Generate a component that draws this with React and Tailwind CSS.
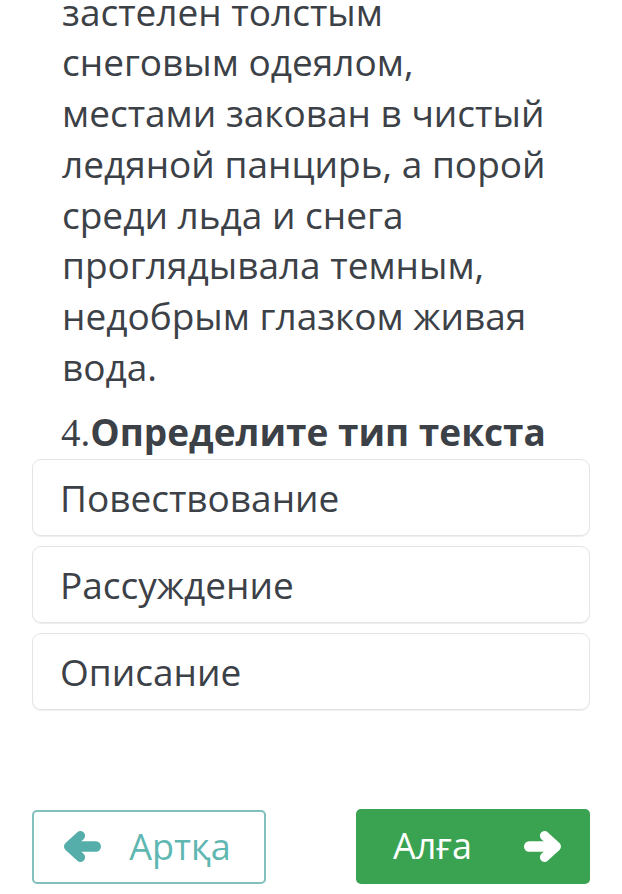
import React from 'react';

const Arrow = ({ dir = 'right', color = '#fff' }) => (
  <svg
    width="38"
    height="31"
    viewBox="0 0 37 30"
    className={dir === 'left' ? 'scale-x-[-1]' : ''}
    fill="none"
    stroke={color}
    strokeLinecap="round"
    strokeLinejoin="round"
  >
    <path d="M5 15 H30" strokeWidth="10" />
    <path d="M20 4.5 L31.5 15 L20 25.5" strokeWidth="9" />
  </svg>
);

const options = ['Повествование', 'Рассуждение', 'Описание'];

const App = () => {
  return (
    <div className="w-[622px] h-[894px] overflow-hidden bg-white font-['Open_Sans',sans-serif] text-[#3c4147]">
      <p className="mt-[-13.5px] pl-[62px] pr-[30px] text-[37px] leading-[50.8px]">
        застелен толстым
        <br />
        снеговым одеялом,
        <br />
        местами закован в чистый
        <br />
        ледяной панцирь, а порой
        <br />
        среди льда и снега
        <br />
        проглядывала темным,
        <br />
        недобрым глазком живая
        <br />
        вода.
      </p>

      <h2 className="mt-[14px] pl-[61px] text-[37px] leading-[50px] font-bold whitespace-nowrap">
        <span className="font-['Liberation_Serif',serif] font-normal text-[39px]">4.</span>Определите тип текста
      </h2>

      {/* Answer options */}
      <div className="mt-px px-[32px] flex flex-col gap-[10px]">
        {options.map((o) => (
          <div
            key={o}
            className="h-[77px] border border-[#e2e4e7] rounded-[9px] pl-[27px] flex items-center text-[37px] leading-[50px] pt-[2px] shadow-[0_1px_0_#eceef0]"
          >
            {o}
          </div>
        ))}
      </div>

      {/* Navigation */}
      <div className="mt-[100px] px-[32px] flex justify-between">
        <button className="w-[234px] h-[74px] border-2 border-[#80c1bd] rounded-[5px] flex items-center justify-center gap-[28px] text-[36px] text-[#5fb7b2] pr-[4px]">
          <Arrow dir="left" color="#55aea9" />
          <span>Артқа</span>
        </button>
        <button className="w-[234px] h-[75px] -mt-px bg-[#3aa352] rounded-[5px] flex items-center justify-between pl-[37px] pr-[28px] text-[36px] text-white">
          <span>Алға</span>
          <Arrow dir="right" color="#ffffff" />
        </button>
      </div>
    </div>
  );
};

export default App;
